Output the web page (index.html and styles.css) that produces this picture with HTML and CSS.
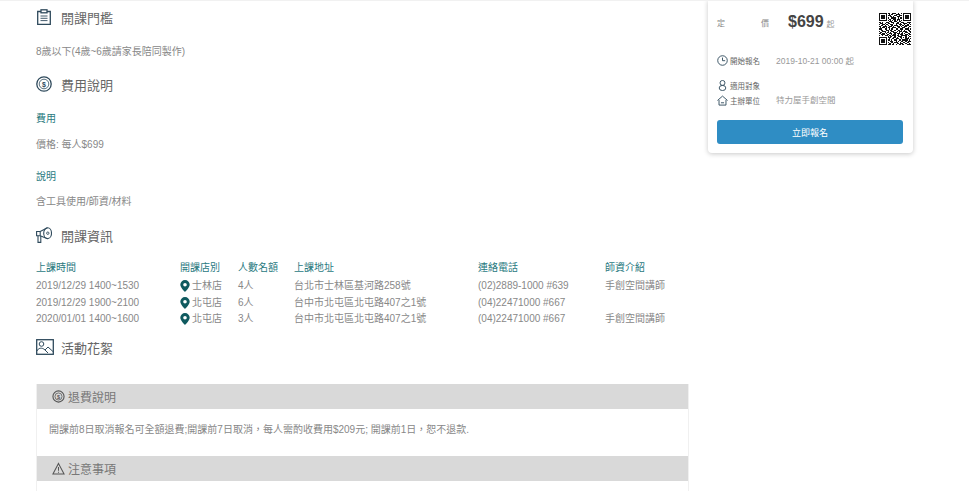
FILE: index.html
```html
<!DOCTYPE html>
<html lang="zh-Hant">
<head>
<meta charset="utf-8">
<title>課程</title>
<link rel="stylesheet" href="styles.css">
</head>
<body>
<div class="page">
  <main class="main">
    <h2 class="title first">
      <svg class="ti" viewBox="0 0 16 16" fill="none" stroke="#2f4a5c" stroke-width="1.300"><path d="M5 2.500H1.700v12.800h12.600V2.500H11"/><rect x="5" y=".8" width="6" height="3"/><path d="M4.500 7h7M4.500 9.300h7M4.500 11.600h7" stroke-width=".9"/></svg>
      開課門檻
    </h2>
    <p class="txt t1">8歲以下(4歲~6歲請家長陪同製作)</p>
    <h2 class="title t2">
      <svg class="ti" viewBox="0 0 16 16" fill="none" stroke="#2f4a5c"><circle cx="8" cy="8" r="7.200" stroke-width="1.300"/><circle cx="8" cy="8" r="4.800" stroke-width=".8"/><text x="8" y="10.500" class="dollar">$</text></svg>
      費用說明
    </h2>
    <h3 class="sub s1">費用</h3>
    <p class="txt s2">價格: 每人$699</p>
    <h3 class="sub s3">說明</h3>
    <p class="txt s2b">含工具使用/師資/材料</p>
    <h2 class="title t3">
      <svg class="ti" viewBox="0 0 16 16" fill="none" stroke="#2f4a5c" stroke-width="1.100"><path d="M.6 4.500h3.600v4.300H.6zM4.200 4.500 11.500.8M4.200 8.800l7.300 2.900"/><ellipse cx="11.600" cy="6.200" rx="3.900" ry="5.400"/><circle cx="11.800" cy="6.200" r="1.200" stroke-width=".9"/><path d="M2 8.800v6.600h2.800V9"/></svg>
      開課資訊
    </h2>
    <table class="sched">
      <thead>
        <tr><th class="c1">上課時間</th><th class="c2">開課店別</th><th class="c3">人數名額</th><th class="c4">上課地址</th><th class="c5">連絡電話</th><th>師資介紹</th></tr>
      </thead>
      <tbody>
        <tr class="r17"><td>2019/12/29 1400~1530</td><td><svg class="pin" viewBox="0 0 10 12"><path fill-rule="evenodd" fill="#0f5a5f" d="M5 0a4.700 4.700 0 0 1 4.700 4.700C9.700 7.500 5 12 5 12S.3 7.500.3 4.700A4.700 4.700 0 0 1 5 0zm0 3a1.800 1.800 0 1 0 0 3.600A1.800 1.800 0 0 0 5 3z"/></svg>士林店</td><td>4人</td><td>台北市士林區基河路258號</td><td>(02)2889-1000 #639</td><td>手創空間講師</td></tr>
        <tr class="r17"><td>2019/12/29 1900~2100</td><td><svg class="pin" viewBox="0 0 10 12"><path fill-rule="evenodd" fill="#0f5a5f" d="M5 0a4.700 4.700 0 0 1 4.700 4.700C9.700 7.500 5 12 5 12S.3 7.500.3 4.700A4.700 4.700 0 0 1 5 0zm0 3a1.800 1.800 0 1 0 0 3.600A1.800 1.800 0 0 0 5 3z"/></svg>北屯店</td><td>6人</td><td>台中市北屯區北屯路407之1號</td><td>(04)22471000 #667</td><td></td></tr>
        <tr class="r16"><td>2020/01/01 1400~1600</td><td><svg class="pin" viewBox="0 0 10 12"><path fill-rule="evenodd" fill="#0f5a5f" d="M5 0a4.700 4.700 0 0 1 4.700 4.700C9.700 7.500 5 12 5 12S.3 7.500.3 4.700A4.700 4.700 0 0 1 5 0zm0 3a1.800 1.800 0 1 0 0 3.600A1.800 1.800 0 0 0 5 3z"/></svg>北屯店</td><td>3人</td><td>台中市北屯區北屯路407之1號</td><td>(04)22471000 #667</td><td>手創空間講師</td></tr>
      </tbody>
    </table>
    <h2 class="title t4">
      <svg class="ti wide" viewBox="0 0 18 16" fill="none" stroke="#2f4a5c" stroke-width="1.300"><rect x=".7" y=".7" width="16.600" height="14.600"/><circle cx="5.500" cy="5" r="2.300" stroke-width="1"/><path d="M1 12c1-3 5-4 8-1l3 3M9 11l3-3 5.500 5" stroke-width="1"/></svg>
      活動花絮
    </h2>
    <section class="panel">
      <h4 class="phead"><svg class="pi" viewBox="0 0 14 14" fill="none" stroke="#555"><circle cx="7" cy="7" r="6" stroke-width="1.200"/><circle cx="7" cy="7" r="3.800" stroke-width=".8"/><text x="7" y="9.300" class="dollar small">$</text></svg>退費說明</h4>
      <p class="pbody">開課前8日取消報名可全額退費;開課前7日取消，每人需酌收費用$209元; 開課前1日，恕不退款.</p>
      <h4 class="phead"><svg class="pi" viewBox="0 0 14 14" fill="none" stroke="#555" stroke-width="1.100"><path d="M7 1.500 13 13H1z"/><path d="M7 5.500v4M7 10.500v1.200"/></svg>注意事項</h4>
      <div class="pbody"></div>
    </section>
  </main>
  <aside class="card">
    <div class="price-row">
      <span class="lbl-price"><span>定</span><span>價</span></span>
      <strong class="price">$699</strong><span class="qi">起</span>
      <svg class="qr" viewBox="0 0 29 29" shape-rendering="crispEdges"><path fill="none" stroke="#111" d="M.5.500h6v6h-6zM22.500.500h6v6h-6zM.5 22.500h6v6h-6z"/><path fill="#111" d="M2 2h3v3H2zM24 2h3v3h-3zM2 24h3v3H2z"/><path fill="none" stroke="#111" d="M8 .5h2M12 .5h3M17 .5h1M20 .5h1M9 1.500h1M11 1.500h2M15 1.500h4M8 2.500h3M14 2.500h2M18 2.500h3M10 3.500h2M13 3.500h1M16 3.500h3M8 4.500h1M11 4.500h4M17 4.500h1M19 4.500h2M9 5.500h2M13 5.500h2M16 5.500h3M8 6.500h1M10 6.500h1M12 6.500h1M14 6.500h1M16 6.500h1M18 6.500h1M20 6.500h1M9 7.500h3M14 7.500h2M18 7.500h2M0 8.500h2M3 8.500h1M6 8.500h3M11 8.500h3M16 8.500h2M20 8.500h3M25 8.500h4M1 9.500h3M5 9.500h1M8 9.500h2M13 9.500h1M15 9.500h3M19 9.500h1M22 9.500h3M27 9.500h1M0 10.500h1M3 10.500h2M6 10.500h2M10 10.500h3M15 10.500h1M18 10.500h3M23 10.500h1M25 10.500h2M28 10.500h1M2 11.500h2M5 11.500h1M8 11.500h1M11 11.500h2M14 11.500h3M19 11.500h1M21 11.500h2M24 11.500h3M0 12.500h2M4 12.500h3M9 12.500h3M13 12.500h1M16 12.500h3M20 12.500h1M23 12.500h2M27 12.500h2M1 13.500h1M3 13.500h2M6 13.500h1M8 13.500h2M12 13.500h3M17 13.500h2M21 13.500h3M26 13.500h1M0 14.500h3M5 14.500h2M9 14.500h1M11 14.500h2M15 14.500h2M19 14.500h3M24 14.500h3M28 14.500h1M2 15.500h2M6 15.500h3M10 15.500h2M14 15.500h1M17 15.500h2M20 15.500h1M23 15.500h1M26 15.500h2M0 16.500h1M3 16.500h3M8 16.500h1M11 16.500h3M16 16.500h1M18 16.500h3M22 16.500h3M27 16.500h2M1 17.500h2M5 17.500h1M7 17.500h2M10 17.500h1M13 17.500h3M18 17.500h1M21 17.500h1M24 17.500h2M28 17.500h1M0 18.500h2M3 18.500h2M6 18.500h1M9 18.500h3M14 18.500h1M16 18.500h3M20 18.500h2M23 18.500h1M26 18.500h2M2 19.500h3M7 19.500h2M11 19.500h1M13 19.500h2M17 19.500h1M19 19.500h3M24 19.500h2M27 19.500h2M0 20.500h1M3 20.500h1M5 20.500h3M9 20.500h2M12 20.500h3M16 20.500h2M20 20.500h5M26 20.500h1M8 21.500h1M10 21.500h2M14 21.500h1M17 21.500h3M20 21.500h1M24 21.500h1M27 21.500h2M8 22.500h3M13 22.500h2M16 22.500h1M19 22.500h2M22 22.500h1M24 22.500h1M26 22.500h1M9 23.500h1M12 23.500h2M15 23.500h3M20 23.500h1M24 23.500h3M28 23.500h1M8 24.500h2M11 24.500h1M14 24.500h2M18 24.500h2M21 24.500h5M27 24.500h1M10 25.500h3M15 25.500h1M17 25.500h1M20 25.500h2M24 25.500h1M26 25.500h3M8 26.500h1M11 26.500h2M14 26.500h3M19 26.500h1M22 26.500h2M25 26.500h2M9 27.500h2M13 27.500h1M16 27.500h2M19 27.500h3M24 27.500h1M27 27.500h1M8 28.500h3M12 28.500h2M15 28.500h1M18 28.500h2M21 28.500h2M25 28.500h4"/></svg>
    </div>
    <div class="info i1">
      <span class="lbl"><svg class="ci" viewBox="0 0 12 12" fill="none" stroke="#2f4a5c" stroke-width="1"><circle cx="6" cy="6" r="5.200"/><path d="M6 2.800v3.400h2.900"/></svg>開始報名</span>
      <span class="val">2019-10-21 00:00 起</span>
    </div>
    <div class="info i2">
      <span class="lbl"><svg class="ci" viewBox="0 0 12 12" fill="none" stroke="#2f4a5c" stroke-width="1"><circle cx="6" cy="3.200" r="2.700"/><ellipse cx="6" cy="8.700" rx="3.600" ry="2.800"/></svg>適用對象</span>
    </div>
    <div class="info i3">
      <span class="lbl"><svg class="ci" viewBox="0 0 12 12" fill="none" stroke="#2f4a5c" stroke-width="1"><path d="M.5 6 6 1.200 11.500 6M2.200 5.500V11h7.600V5.500M4.300 8.500h3.400"/></svg>主辦單位</span>
      <span class="val val-up">特力屋手創空間</span>
    </div>
    <button class="cta">立即報名</button>
  </aside>
</div>
</body>
</html>
```
FILE: styles.css
```css
* { box-sizing: border-box; }
html, body { margin: 0; height: 100%; overflow: hidden; background: #fff; }
body { font-family: "Liberation Sans", "Noto Sans CJK TC", sans-serif; color: #888; }
.page { display: flex; align-items: flex-start; height: 491px; padding-left: 36px; border-top: 1px solid #f1f1f1; overflow: hidden; }
.main { width: 653px; flex: none; }
.title { display: flex; align-items: center; margin: 0; height: 20px; font-size: 13px; font-weight: 400; color: #666; }
.ti { width: 16px; height: 16px; margin-right: 9px; flex: none; }
.wide { width: 18px; margin-right: 7px; }
.first { margin-top: 6px; }
.dollar { font: 700 7px "Liberation Sans", sans-serif; fill: #2f4a5c; stroke: none; text-anchor: middle; }
.small { font-size: 6px; fill: #555; }
.txt { margin: 0; font-size: 10px; line-height: 14px; color: #888; }
.t1 { margin-top: 18px; }
.t2 { margin-top: 15px; }
.sub { margin: 0; font-size: 10px; line-height: 14px; font-weight: 400; color: #2a7a7f; }
.s1 { margin-top: 18px; }
.s2 { margin-top: 12px; }
.s2b { margin-top: 11px; }
.s3 { margin-top: 18px; }
.t3 { margin-top: 16px; }
.sched { margin-top: 14px; border-collapse: collapse; font-size: 10px; line-height: 14px; color: #888; }
.sched th { padding: 0; height: 18px; font-weight: 400; text-align: left; color: #2a7a7f; }
.sched td { padding: 0; white-space: nowrap; }
.r17 td { height: 17px; }
.r16 td { height: 16px; }
.c1 { width: 144px; }
.c2 { width: 58px; }
.c3 { width: 56px; }
.c4 { width: 184px; }
.c5 { width: 127px; }
.pin { display: inline-block; width: 10px; height: 12px; margin-right: 2px; vertical-align: top; margin-top: 1px; }
.t4 { margin-top: 10px; }
.panel { margin-top: 27px; border-left: 1px solid #f0f0f0; border-right: 1px solid #f0f0f0; }
.phead { display: flex; align-items: center; gap: 3px; margin: 0; height: 25px; padding-left: 15px; background: #d9d9d9; font-size: 12px; font-weight: 400; color: #777; }
.pi { width: 13px; height: 13px; flex: none; }
.pbody { margin: 0; height: 47px; padding: 14px 12px 0; font-size: 10px; line-height: 14px; color: #888; }
.card { width: 205px; height: 153px; margin: -1px 0 0 19px; padding: 0 9px; flex: none; background: #fff; border-radius: 0 0 4px 4px; box-shadow: 0 1px 5px rgba(0,0,0,.22); }
.price-row { display: flex; align-items: center; height: 44px; position: relative; }
.lbl-price { display: flex; justify-content: space-between; width: 52px; font-size: 8px; color: #888; }
.price { margin-left: 19px; font-size: 16px; color: #444; }
.qi { margin: 3px 0 0 3px; font-size: 8px; color: #999; }
.qr { width: 32px; height: 32px; position: absolute; right: -7px; top: 13px; }
.info { display: flex; align-items: center; font-size: 7.500px; }
.lbl { display: flex; align-items: center; gap: 2px; width: 59px; color: #666; }
.val { font-size: 8.500px; color: #999; }
.val-up { margin-top: -3px; }
.ci { width: 11px; height: 11px; flex: none; }
.i1 { margin-top: 8px; height: 16px; }
.i2 { margin-top: 11px; height: 12px; }
.i3 { margin-top: 2px; height: 14px; }
.cta { display: block; width: 186px; height: 24px; margin-top: 13px; padding: 0; border: 0; border-radius: 3px; background: #2f8dc4; color: #fff; font: 9px "Liberation Sans", "Noto Sans CJK TC", sans-serif; }
```
